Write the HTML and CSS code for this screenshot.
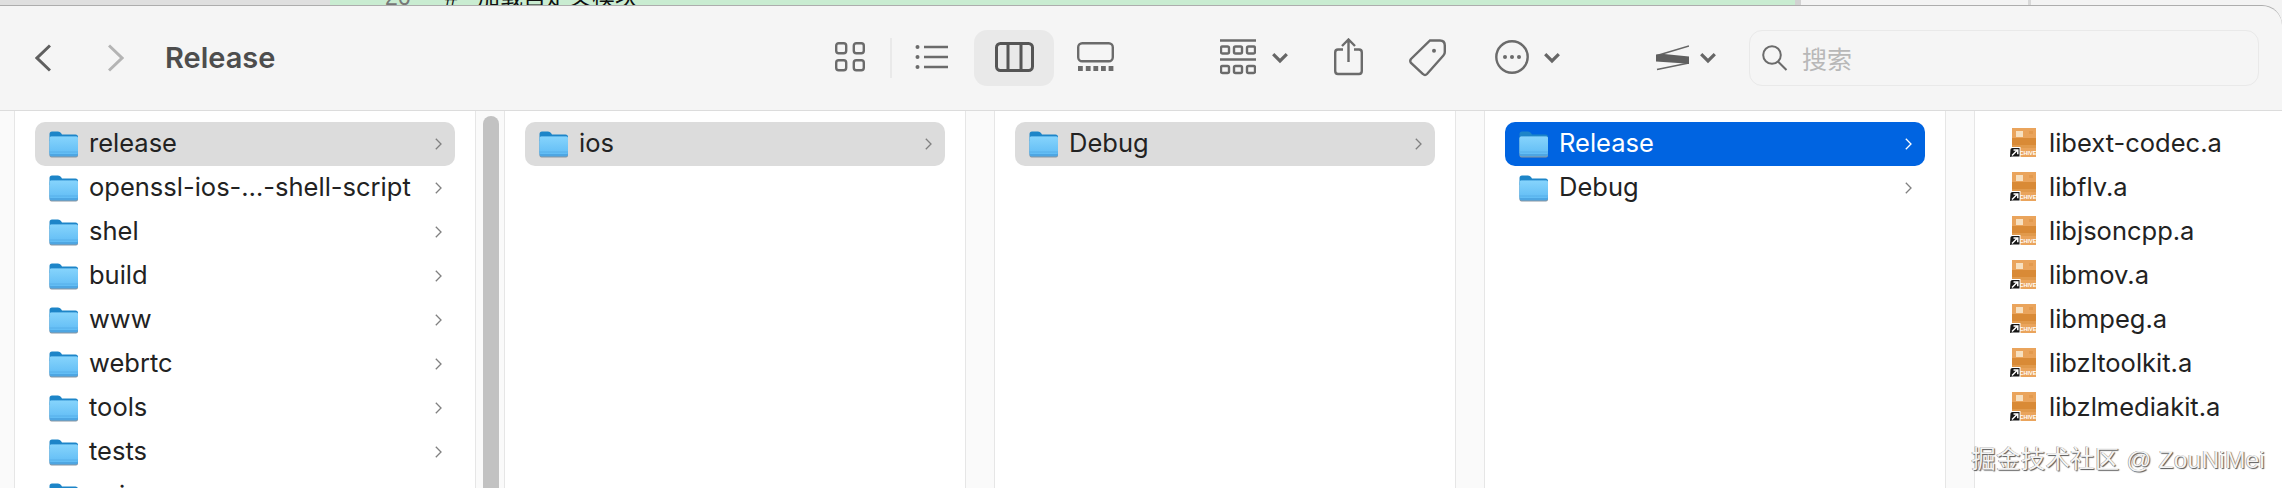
FILE: index.html
```html
<!DOCTYPE html>
<html lang="zh">
<head>
<meta charset="utf-8">
<title>Release</title>
<link rel="stylesheet" href="styles.css">
</head>
<body>
<svg class="defs" width="0" height="0" aria-hidden="true">
  <defs>
    <linearGradient id="folderBody" x1="0" y1="0" x2="0" y2="1">
      <stop offset="0" stop-color="#86d4fc"/>
      <stop offset="1" stop-color="#62bdf5"/>
    </linearGradient>
    <symbol id="folder" viewBox="0 0 29 27">
      <path d="M0.5 3 Q0.5 0.5 3 0.5 H9 Q11 0.5 12 2 L13 3.5 H26.5 Q29 3.5 29 6 V10 H0.5 Z" fill="#1d85c8"/>
      <rect x="0.5" y="6" width="28.5" height="20.5" rx="2" fill="#8a97a3"/>
      <rect x="0.5" y="5.5" width="28.5" height="20" rx="2" fill="#4ea6e2"/>
      <rect x="0.5" y="5.5" width="28.5" height="17.5" rx="1.5" fill="url(#folderBody)"/>
      <rect x="0.5" y="20.5" width="28.5" height="1" fill="#4ea6e2" opacity="0.6"/>
    </symbol>
    <symbol id="archive" viewBox="0 0 27 30">
      <rect x="3" y="0" width="24" height="29" fill="#eaa45c"/>
      <rect x="3" y="10" width="24" height="7" fill="#d98a36"/>
      <rect x="3" y="17" width="24" height="3" fill="#e19a4c"/>
      <rect x="7" y="3" width="7" height="6" fill="#f7e0c0"/>
      <rect x="20" y="3" width="4" height="3" fill="#e39a4e"/>
      <text x="10.5" y="26.5" class="archive-label">CHIVE</text>
      <path d="M0 30 L0.5 21 Q1 19 3 19 H11.5 V29.5 H3 Z" fill="#fff"/>
      <path d="M1 29 L1.5 21.5 Q1.5 20 3.5 20 H10.5 V28.5 H3 Z" fill="#161616"/>
      <path d="M3 27.5 L8.5 22 M4.5 22 H8.8 V26.2" fill="none" stroke="#fff" stroke-width="1.5"/>
    </symbol>
    <symbol id="chev" viewBox="0 0 7 12">
      <path d="M0.8 0.8 L6 6 L0.8 11.2" fill="none" stroke="currentColor" stroke-width="1.3"/>
    </symbol>
    <symbol id="drop" viewBox="0 0 16 40">
      <path d="M1.2 16.2 L8 23 L14.8 16.2" fill="none" stroke="currentColor" stroke-width="3.2"/>
    </symbol>
  </defs>
</svg>

<div class="page">
  <div class="strip">
    <div class="strip-gray"></div>
    <div class="strip-code">
      <span class="line-no">26</span>
      <span class="code-hash">#</span>
      <span class="code-text">加载自定义模块</span>
    </div>
    <div class="strip-pane"></div>
    <div class="strip-rest"></div>
  </div>

  <header class="toolbar">
    <svg class="nav back" width="16" height="28" viewBox="0 0 16 28"><path d="M15 1.5 L2 14 L15 26.5" fill="none" stroke="currentColor" stroke-width="3"/></svg>
    <svg class="nav forward" width="16" height="28" viewBox="0 0 16 28"><path d="M1 1.5 L14 14 L1 26.5" fill="none" stroke="currentColor" stroke-width="3"/></svg>
    <h1 class="title">Release</h1>

    <svg class="icon" width="30" height="40" viewBox="0 0 30 40">
      <rect x="1.2" y="5.2" width="10" height="10" rx="2.5"/><rect x="18.8" y="5.2" width="10" height="10" rx="2.5"/>
      <rect x="1.2" y="22.2" width="10" height="10" rx="2.5"/><rect x="18.8" y="22.2" width="10" height="10" rx="2.5"/>
    </svg>
    <span class="sep"></span>
    <svg class="icon list-icon" width="33" height="40" viewBox="0 0 33 40">
      <circle class="solid" cx="2.5" cy="9" r="2"/><circle class="solid" cx="2.5" cy="19" r="2"/><circle class="solid" cx="2.5" cy="29" r="2"/>
      <path d="M9 9 H33 M9 19 H33 M9 29 H33"/>
    </svg>
    <span class="view-active">
      <svg class="icon dark" width="39" height="40" viewBox="0 0 39 40">
        <rect x="1.5" y="5.5" width="36" height="27" rx="4"/><path d="M13 5.5 V32.5 M26 5.5 V32.5"/>
      </svg>
    </span>
    <svg class="icon gallery-icon" width="37" height="40" viewBox="0 0 37 40">
      <rect x="1.2" y="5.2" width="34.6" height="18" rx="4"/>
      <g class="solid"><rect x="1" y="28" width="4.8" height="5"/><rect x="8.8" y="28" width="4.8" height="5"/><rect x="16.4" y="28" width="4.8" height="5"/><rect x="24" y="28" width="4.8" height="5"/><rect x="31.6" y="28" width="4.8" height="5"/></g>
    </svg>

    <svg class="icon group-icon" width="36" height="40" viewBox="0 0 36 40">
      <path d="M0 2.5 H36 M0 21.5 H36"/>
      <rect x="1" y="8.5" width="8" height="7" rx="1.5"/><rect x="14" y="8.5" width="8" height="7" rx="1.5"/><rect x="27" y="8.5" width="8" height="7" rx="1.5"/>
      <rect x="1" y="28" width="8" height="7" rx="1.5"/><rect x="14" y="28" width="8" height="7" rx="1.5"/><rect x="27" y="28" width="8" height="7" rx="1.5"/>
    </svg>
    <svg class="drop drop-group" width="16" height="40"><use href="#drop"/></svg>
    <svg class="icon share-icon" width="29" height="40" viewBox="0 0 29 40">
      <path d="M9 11.5 H4 Q1.2 11.5 1.2 14.5 V33 Q1.2 36 4 36 H25 Q27.8 36 27.8 33 V14.5 Q27.8 11.5 25 11.5 H20"/>
      <path d="M14.5 2 V24 M8 8 L14.5 1.5 L21 8"/>
    </svg>
    <svg class="icon tag-icon" width="37" height="40" viewBox="0 0 37 40">
      <path d="M21 2.5 H31 Q35.8 2.5 35.8 7.5 V14 Q35.8 16 34.6 17.2 L18 36 Q16 38 14 36 L2 25 Q0.5 23 2 21 Z"/>
      <circle class="solid" cx="25" cy="12.7" r="2"/>
    </svg>
    <svg class="icon more-icon" width="34" height="40" viewBox="0 0 34 40">
      <circle cx="17" cy="19" r="15.7"/>
      <circle class="solid" cx="10" cy="19" r="2"/><circle class="solid" cx="17" cy="19" r="2"/><circle class="solid" cx="24" cy="19" r="2"/>
    </svg>
    <svg class="drop drop-more" width="16" height="40"><use href="#drop"/></svg>
    <svg class="swoosh" width="33" height="40" viewBox="0 0 33 40">
      <path d="M33 8 L1 17.5 M33 25 L1 31.5" fill="none" stroke="#666" stroke-width="1.6"/>
      <path d="M0 16.5 L8 16 L33 18.5 V26 L22 25 L0 23.5 Z" fill="#5f5f5f"/>
    </svg>
    <svg class="drop drop-swoosh" width="16" height="40"><use href="#drop"/></svg>

    <label class="search">
      <svg class="icon mag" width="26" height="26" viewBox="0 0 26 26">
        <circle cx="10" cy="10" r="8.8"/><path d="M16 16.5 L24.5 25"/>
      </svg>
      <span class="placeholder">搜索</span>
    </label>
  </header>

  <main class="browser">
    <div class="edge"></div>

    <section class="column">
      <div class="row selected"><svg class="folder"><use href="#folder"/></svg><span class="name">release</span><svg class="chev"><use href="#chev"/></svg></div>
      <div class="row"><svg class="folder"><use href="#folder"/></svg><span class="name">openssl-ios-…-shell-script</span><svg class="chev"><use href="#chev"/></svg></div>
      <div class="row"><svg class="folder"><use href="#folder"/></svg><span class="name">shel</span><svg class="chev"><use href="#chev"/></svg></div>
      <div class="row"><svg class="folder"><use href="#folder"/></svg><span class="name">build</span><svg class="chev"><use href="#chev"/></svg></div>
      <div class="row"><svg class="folder"><use href="#folder"/></svg><span class="name">www</span><svg class="chev"><use href="#chev"/></svg></div>
      <div class="row"><svg class="folder"><use href="#folder"/></svg><span class="name">webrtc</span><svg class="chev"><use href="#chev"/></svg></div>
      <div class="row"><svg class="folder"><use href="#folder"/></svg><span class="name">tools</span><svg class="chev"><use href="#chev"/></svg></div>
      <div class="row"><svg class="folder"><use href="#folder"/></svg><span class="name">tests</span><svg class="chev"><use href="#chev"/></svg></div>
      <div class="row"><svg class="folder"><use href="#folder"/></svg><span class="name">api</span><svg class="chev"><use href="#chev"/></svg></div>
    </section>
    <div class="gutter"><div class="thumb"></div></div>

    <section class="column">
      <div class="row selected"><svg class="folder"><use href="#folder"/></svg><span class="name">ios</span><svg class="chev"><use href="#chev"/></svg></div>
    </section>
    <div class="gutter"></div>

    <section class="column">
      <div class="row selected"><svg class="folder"><use href="#folder"/></svg><span class="name">Debug</span><svg class="chev"><use href="#chev"/></svg></div>
    </section>
    <div class="gutter"></div>

    <section class="column">
      <div class="row active"><svg class="folder"><use href="#folder"/></svg><span class="name">Release</span><svg class="chev"><use href="#chev"/></svg></div>
      <div class="row"><svg class="folder"><use href="#folder"/></svg><span class="name">Debug</span><svg class="chev"><use href="#chev"/></svg></div>
    </section>
    <div class="gutter"></div>

    <section class="column last">
      <div class="row"><svg class="archive"><use href="#archive"/></svg><span class="name">libext-codec.a</span></div>
      <div class="row"><svg class="archive"><use href="#archive"/></svg><span class="name">libflv.a</span></div>
      <div class="row"><svg class="archive"><use href="#archive"/></svg><span class="name">libjsoncpp.a</span></div>
      <div class="row"><svg class="archive"><use href="#archive"/></svg><span class="name">libmov.a</span></div>
      <div class="row"><svg class="archive"><use href="#archive"/></svg><span class="name">libmpeg.a</span></div>
      <div class="row"><svg class="archive"><use href="#archive"/></svg><span class="name">libzltoolkit.a</span></div>
      <div class="row"><svg class="archive"><use href="#archive"/></svg><span class="name">libzlmediakit.a</span></div>
    </section>
  </main>

  <div class="watermark">掘金技术社区 @ ZouNiMei</div>
</div>
</body>
</html>
```

FILE: styles.css
```css
* { box-sizing: border-box; }

html, body {
  margin: 0;
  padding: 0;
  background: #f3f3f3;
}

.defs { position: absolute; }

.page {
  position: relative;
  width: 2282px;
  height: 488px;
  overflow: hidden;
  font-family: Inter, "Noto Sans CJK SC", sans-serif;
  color: #222;
}

/* window behind the Finder */
.strip {
  display: flex;
  height: 5px;
  overflow: hidden;
}
.strip-gray { flex: none; width: 330px; background: #dfdfdf; }
.strip-code {
  flex: none;
  display: flex;
  width: 1465px;
  background: #c9ecd1;
  padding-left: 55px;
  font-family: "Liberation Sans", "Noto Sans CJK SC", sans-serif;
  font-size: 23px;
  line-height: 28px;
  color: #111;
}
.line-no { color: #777; margin-top: -17px; width: 60px; }
.code-hash { margin-top: -17px; width: 32px; }
.code-text { margin-top: -17px; }
.strip-pane { flex: none; width: 233px; background: #f3f3f3; border-left: 6px solid #d2d2d2; }
.strip-rest { flex: 1; background: #f3f3f3; border-left: 3px solid #d8d8d8; }

/* toolbar */
.toolbar {
  display: flex;
  align-items: center;
  height: 106px;
  padding-left: 35px;
  background: #f5f5f5;
  border-top: 1px solid #adadad;
  border-bottom: 1px solid #dcdcdc;
  border-top-right-radius: 20px;
}
.nav { flex: none; }
.back { color: #5f5f5f; }
.forward { color: #b4b4b4; margin-left: 57px; }
.title {
  flex: 0 0 670px;
  margin: 0 0 1px 41px;
  font-size: 29px;
  font-weight: 600;
  color: #4d4d4d;
}
.icon {
  flex: none;
  fill: none;
  stroke: #6b6b6b;
  stroke-width: 2.4;
}
.icon .solid { fill: #6b6b6b; stroke: none; }
.icon.dark { stroke: #555; stroke-width: 3; }
.sep { width: 2px; height: 40px; margin-left: 25px; background: #e9e9e9; }
.list-icon { margin-left: 23px; }
.view-active {
  display: flex;
  align-items: center;
  justify-content: center;
  width: 80px;
  height: 56px;
  margin-left: 26px;
  border-radius: 13px;
  background: #e9e9e9;
}
.gallery-icon { margin-left: 23px; }
.group-icon { margin-left: 106px; }
.drop { flex: none; color: #666; }
.drop-group { margin-left: 16px; }
.share-icon { margin-left: 46px; }
.tag-icon { margin-left: 46px; }
.more-icon { margin-left: 49px; }
.drop-more { margin-left: 15px; }
.swoosh { flex: none; margin-left: 96px; }
.drop-swoosh { margin-left: 11px; }
.search {
  display: flex;
  align-items: center;
  width: 510px;
  height: 56px;
  margin-left: 33px;
  padding-left: 12px;
  border: 1.5px solid #e9e9e9;
  border-radius: 13px;
}
.mag { stroke-width: 2; }
.placeholder {
  margin-left: 14px;
  font-size: 25px;
  color: #b8b8b8;
}

/* columns */
.browser {
  display: flex;
  height: 377px;
  background: #fff;
}
.edge {
  flex: none;
  width: 15px;
  background: #fafafa;
  border-right: 1px solid #e6e6e6;
}
.column {
  flex: none;
  width: 460px;
  padding: 11px 20px 0;
  background: #fff;
}
.column.last { flex: 1; }
.gutter {
  flex: none;
  width: 30px;
  padding: 5px 0 0 7px;
  background: #fafafa;
  border-left: 1px solid #e6e6e6;
  border-right: 1px solid #e6e6e6;
}
.thumb {
  width: 16px;
  height: 100%;
  border-radius: 8px 8px 0 0;
  background: #c2c2c2;
}
.row {
  display: flex;
  align-items: center;
  width: 420px;
  height: 44px;
  padding: 0 13px 0 14px;
  border-radius: 10px;
  font-size: 25.5px;
  color: #222;
}
.row.selected { background: #dcdcdc; }
.row.active { background: #0064e1; color: #fff; }
.folder { flex: none; width: 29px; height: 27px; }
.archive { flex: none; width: 27px; height: 30px; margin-bottom: 2px; }
.name { flex: 1; margin-left: 11px; padding-bottom: 3px; white-space: nowrap; }
.archive + .name { margin-left: 13px; }
.chev { flex: none; width: 7px; height: 12px; color: #808080; }
.active .chev { color: #fff; }
.archive-label {
  font-family: "Liberation Sans", sans-serif;
  font-size: 5.5px;
  font-weight: 700;
  fill: #fff;
}

/* watermark sits on top of the listing */
.watermark {
  position: absolute;
  right: 17px;
  bottom: 13px;
  font-family: "Liberation Sans", "Noto Sans CJK SC", sans-serif;
  font-size: 24.5px;
  letter-spacing: 0.2px;
  line-height: 30px;
  color: #f4f4f4;
  white-space: nowrap;
  text-shadow: 1px 1px 1px #555, -0.5px -0.5px 0 #888;
}
```
